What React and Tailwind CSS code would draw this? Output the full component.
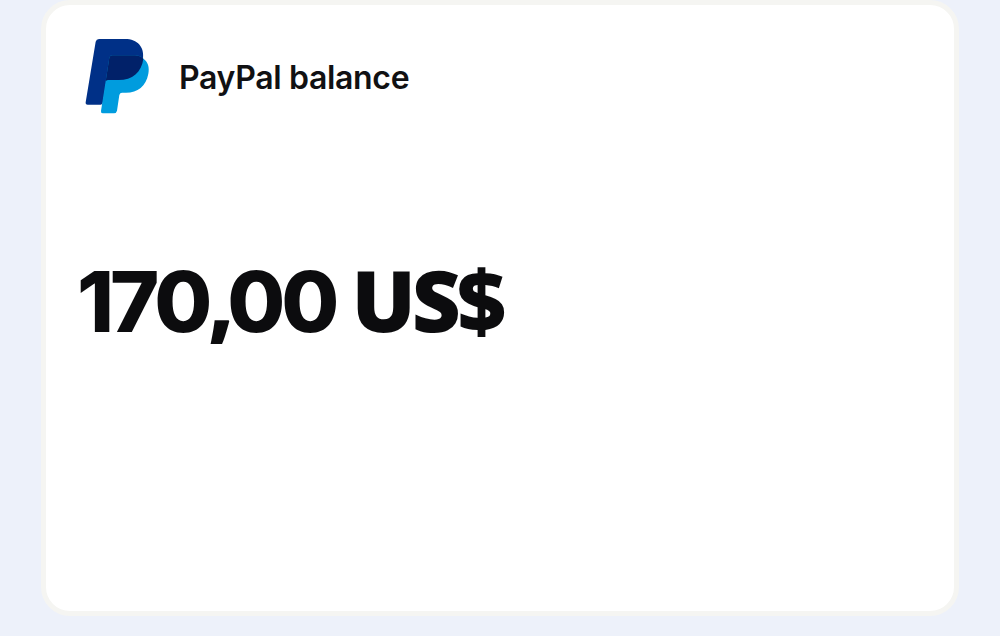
const PayPalLogo = () => (
  <svg viewBox="0 0 270 285" className="w-[90px] h-[95px] shrink-0" aria-hidden="true">
    <path
      d="M72 27H150C188 27 209 51 204 87C199 127 172 150 131 150H103C97 150 94 153 93 161L84 217Q83 224 77 224H38Q31 224 32 217L62 35Q64 27 72 27Z"
      fill="#003087"
    />
    <path
      d="M112 76H174C191 76 200 81 205 86C219 95 224 112 220 131C213 169 188 188 153 188H141Q135 188 133 195L126 242Q124 250 117 250H83Q77 250 78 243L103 83Q105 76 112 76Z"
      fill="#009cde"
    />
    <path
      d="M112 76H174C191 76 200 81 205 86C200 127 172 150 131 150H103C97 150 94 151 92 154L103 83Q105 76 112 76Z"
      fill="#012169"
    />
  </svg>
);

const BalanceCard = ({ title, whole, cents, currency }) => (
  <section className="w-[918px] h-[616px] bg-white border-[5px] border-[#f5f5f2] rounded-[29px]">
    <header className="flex items-center pl-[29px] pt-[25px]">
      <PayPalLogo />
      <h1 className="ml-[14px] text-[32px] leading-[40px] font-[560] tracking-[-0.33px] text-[#111113]">
        {title}
      </h1>
    </header>
    <p className="flex items-baseline h-[100px] pl-[31px] mt-[124px] text-[84px] leading-[100px] font-extrabold text-[#0c0c0e] whitespace-nowrap">
      <span className="tracking-[-4px]">{whole}</span>
      <span className="tracking-[-7px] font-['Open_Sans',sans-serif]">,</span>
      <span className="tracking-[-4px]">{cents}</span>
      <span className="ml-[16px] font-['Open_Sans',sans-serif] text-[85px] tracking-[-4px]">
        {currency}
      </span>
    </p>
  </section>
);

const App = () => {
  return (
    <main className="h-[636px] w-[1000px] overflow-hidden flex justify-center items-start bg-[#edf1fa] font-['Inter',sans-serif]">
      <BalanceCard title="PayPal balance" whole="170" cents="00" currency="US$" />
    </main>
  );
};

export default App;
